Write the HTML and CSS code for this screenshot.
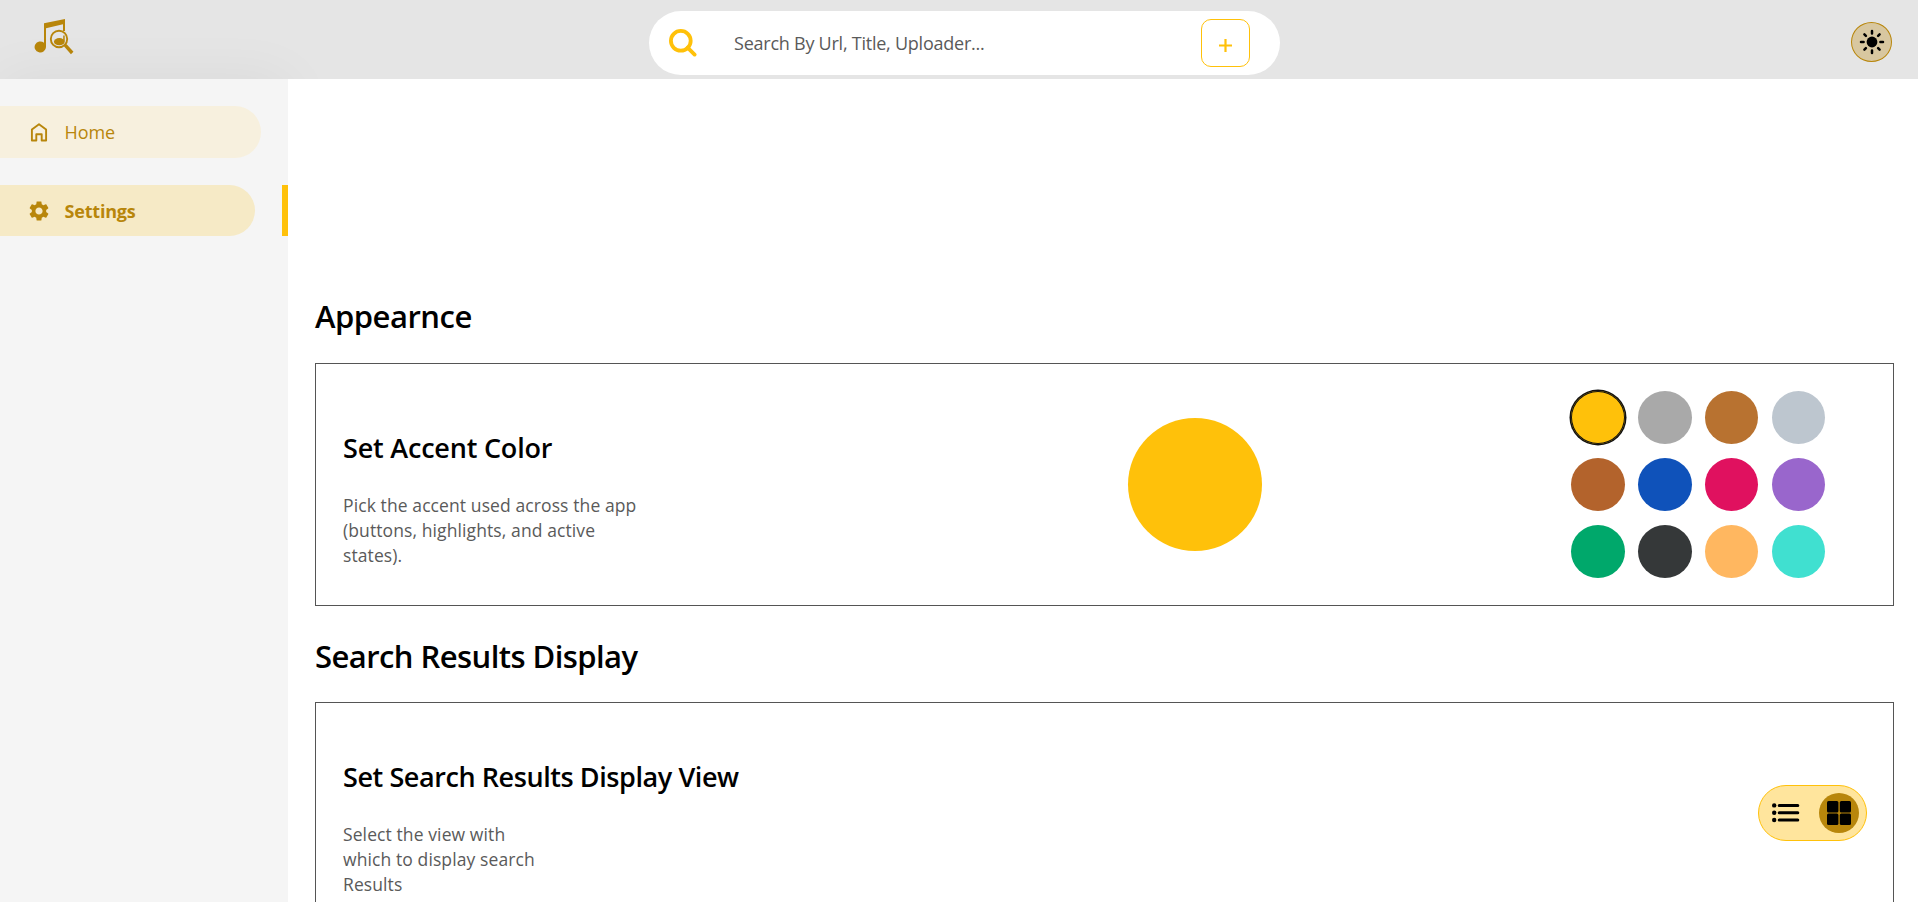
FILE: index.html
```html
<!DOCTYPE html>
<html lang="en">
<head>
<meta charset="utf-8">
<title>Settings</title>
<link rel="stylesheet" href="styles.css">
</head>
<body>
<div class="app">
  <header class="topbar">
    <svg class="logo" viewBox="0 0 40 38" width="40" height="38" fill="#b8860b">
      <path d="M10 4.2 31 0v12h-2V5.2L12 9.2v18.8a5.7 5.5 0 1 1-2-4.2z"/>
      <circle cx="25" cy="20" r="8.2" fill="none" stroke="#b8860b" stroke-width="1.9"/>
      <ellipse cx="25.3" cy="22.7" rx="5.4" ry="3.6"/>
      <path d="M29.2 16.6h1.5v6h-1.5z"/>
      <path d="m31.2 26.2 7 7.8" stroke="#b8860b" stroke-width="3.4"/>
    </svg>
    <div class="search">
      <svg class="search-icon" viewBox="0 0 28 28" width="28" height="28" fill="none" stroke="#ffc10a" stroke-width="3.8"><circle cx="11.8" cy="11.8" r="9.9"/><path d="m18.6 18.6 7 7" stroke-linecap="round"/></svg>
      <span class="placeholder">Search By Url, Title, Uploader...</span>
      <button class="add" aria-label="Add"><svg viewBox="0 0 13 13" width="13" height="13" stroke="#ffc10a" stroke-width="2.2"><path d="M6.5 0v13M0 6.5h13"/></svg></button>
    </div>
    <button class="theme" aria-label="Theme">
      <svg viewBox="0 0 26 26" width="26" height="26" stroke="#000" stroke-width="2.5" stroke-linecap="round"><circle cx="13" cy="13" r="5.4" stroke="none"/><path d="M13 2v2.4M13 21.6V24M2 13h2.6M21.4 13H24M5.4 5.4l1.5 1.5M19.1 19.1l1.5 1.5M5.4 20.6l1.5-1.5M19.1 6.9l1.5-1.5"/></svg>
    </button>
  </header>
  <div class="body">
    <nav class="sidebar">
      <div class="nav-row">
        <a class="nav-item home">
          <svg viewBox="0 0 18 19" width="18" height="19" fill="none" stroke="#b8860b" stroke-width="1.9" stroke-linejoin="round"><path d="M1.9 6.6 9 1.3l7.1 5.3v10.9h-4.4v-6.2H6.3v6.2H1.9z"/></svg>
          <span>Home</span>
        </a>
      </div>
      <div class="nav-row active">
        <a class="nav-item settings">
          <svg viewBox="2 2 20 20" width="20" height="20" fill="#b8860b"><path d="M19.14 12.94c.04-.3.06-.61.06-.94 0-.32-.02-.64-.07-.94l2.03-1.58c.18-.14.23-.41.12-.61l-1.92-3.32c-.12-.22-.37-.29-.59-.22l-2.39.96c-.5-.38-1.03-.7-1.62-.94l-.36-2.54c-.04-.24-.24-.41-.48-.41h-3.84c-.24 0-.43.17-.47.41l-.36 2.54c-.59.24-1.13.57-1.62.94l-2.39-.96c-.22-.08-.47 0-.59.22L2.74 8.87c-.12.21-.08.47.12.61l2.03 1.58c-.05.3-.09.63-.09.94s.02.64.07.94l-2.03 1.58c-.18.14-.23.41-.12.61l1.92 3.32c.12.22.37.29.59.22l2.39-.96c.5.38 1.03.7 1.62.94l.36 2.54c.05.24.24.41.48.41h3.84c.24 0 .44-.17.47-.41l.36-2.54c.59-.24 1.13-.56 1.62-.94l2.39.96c.22.08.47 0 .59-.22l1.92-3.32c.12-.22.07-.47-.12-.61l-2.01-1.58zM12 15.6c-1.98 0-3.6-1.62-3.6-3.6s1.62-3.6 3.6-3.6 3.6 1.62 3.6 3.6-1.62 3.6-3.6 3.6z"/></svg>
          <span>Settings</span>
        </a>
      </div>
    </nav>
    <main class="content">
      <h1 class="section-title t-appearance">Appearnce</h1>
      <section class="card accent">
        <div class="card-text">
          <h2 class="card-title t-accent">Set Accent Color</h2>
          <p class="desc d-accent">Pick the accent used across the app<br>(buttons, highlights, and active<br>states).</p>
        </div>
        <div class="preview"></div>
        <div class="swatches">
          <i class="sw gold selected"></i><i class="sw grey"></i><i class="sw bronze"></i><i class="sw silver"></i>
          <i class="sw copper"></i><i class="sw blue"></i><i class="sw ruby"></i><i class="sw violet"></i>
          <i class="sw green"></i><i class="sw onyx"></i><i class="sw peach"></i><i class="sw aqua"></i>
        </div>
      </section>
      <h1 class="section-title t-results">Search Results Display</h1>
      <section class="card results">
        <div class="card-text">
          <h2 class="card-title t-view">Set Search Results Display View</h2>
          <p class="desc d-view">Select the view with<br>which to display search<br>Results</p>
        </div>
        <div class="toggle">
          <span class="opt"><svg viewBox="0 0 28 20" width="28" height="20" stroke="#000" stroke-width="3" stroke-linecap="round"><g stroke="none"><circle cx="2.2" cy="2.4" r="2.2"/><circle cx="2.2" cy="9.7" r="2.2"/><circle cx="2.2" cy="17" r="2.2"/></g><path d="M7.2 2.6h18.6M7.2 9.8h18.6M7.2 17h18.6"/></svg></span>
          <span class="opt on"><svg viewBox="0 0 24 24" width="24" height="24"><rect width="11.4" height="11.4" rx="1.5"/><rect x="12.8" width="11.2" height="11.4" rx="1.5"/><rect y="12.6" width="11.4" height="11.4" rx="1.5"/><rect x="12.8" y="12.6" width="11.2" height="11.4" rx="1.5"/></svg></span>
        </div>
      </section>
    </main>
  </div>
</div>
</body>
</html>
```

FILE: styles.css
```css
* { box-sizing: border-box; }
body {
  margin: 0;
  background: #fff;
  color: #000;
  font-family: "Segoe UI", "Open Sans", "Noto Sans", sans-serif;
}
h1, h2, p { margin: 0; }
button { padding: 0; font: inherit; }
svg { display: block; flex: none; }
.app { height: 902px; overflow: hidden; display: flex; flex-direction: column; }

.topbar {
  flex: none;
  height: 79px;
  background: #e5e5e5;
  display: flex;
  align-items: flex-start;
}
.logo { margin: 19px 0 0 34px; }
.search {
  margin: 11px 0 0 575px;
  width: 631px;
  height: 64px;
  border-radius: 32px;
  background: #fff;
  display: flex;
  align-items: center;
  padding: 0 30px 0 20px;
}
.placeholder {
  flex: 1;
  margin-left: 37px;
  font-size: 18px;
  line-height: 24px;
  color: #5a5a5a;
  white-space: nowrap;
  letter-spacing: -0.24px;
}
.add {
  width: 49px;
  height: 48px;
  border: 1px solid #ffc10a;
  border-radius: 10px;
  background: #fff;
  display: flex;
  align-items: center;
  justify-content: center;
  padding-top: 5px;
}
.theme {
  margin: 22px 0 0 571px;
  width: 41px;
  height: 40px;
  border: 1px solid #b8860b;
  border-radius: 50%;
  background: #d8c7a0;
  display: flex;
  align-items: center;
  justify-content: center;
}

.body { flex: 1; min-height: 0; display: flex; }
.sidebar {
  flex: none;
  width: 288px;
  background: #f5f5f5;
  padding-top: 27px;
  display: flex;
  flex-direction: column;
  gap: 27px;
  box-shadow: 0 0 54px rgba(0, 0, 0, 0.055);
}
.nav-row.active { border-right: 6px solid #ffc10a; }
.nav-item {
  display: flex;
  align-items: center;
  height: 52px;
  color: #b8860b;
  font-size: 18px;
  border-radius: 0 26px 26px 0;
}
.home { width: 261px; background: #f7f0de; padding-left: 30px; gap: 16.5px; letter-spacing: -0.1px; }
.settings { width: 255px; height: 51px; background: #f6eac6; padding-left: 29px; gap: 15.5px; font-weight: 700; letter-spacing: -0.2px; }

.content { flex: 1; background: #fff; padding: 215px 24px 0 27px; }
.section-title { font-size: 31px; font-weight: 600; line-height: 44px; white-space: nowrap; letter-spacing: -0.5px; }
.t-results { margin-top: 28px; letter-spacing: -0.56px; }
.card { margin-top: 25px; border: 1px solid #555; display: flex; }
.accent { height: 243px; }
.results { margin-top: 24px; height: 270px; }
.card-text { width: 785px; padding-left: 27px; }
.accent .card-text { padding-top: 65px; }
.results .card-text { padding-top: 55px; }
.card-title { font-size: 27px; font-weight: 600; line-height: 38px; white-space: nowrap; letter-spacing: -0.2px; }
.t-view { letter-spacing: -0.42px; }
.desc { margin-top: 26px; font-size: 17.5px; line-height: 25px; color: #5a5a5a; white-space: nowrap; letter-spacing: 0.1px; }

.preview { width: 134px; height: 133px; border-radius: 50%; background: #ffc10a; margin: 54px 0 0 27px; }
.swatches {
  margin: 27px 0 0 309px;
  display: grid;
  grid-template-columns: 54px 54px 53px 53px;
  grid-auto-rows: 53px;
  gap: 14px 13px;
  align-content: start;
}
.sw { border-radius: 50%; }
.sw:nth-child(4n) { margin: 0 -1px 0 1px; }
.selected { box-shadow: 0 0 0 1.5px #111, inset 0 0 0 1px #111; }
.gold { background: #ffc10a; }
.grey { background: #a9a9a9; }
.bronze { background: #b87230; }
.silver { background: #bdc6cf; }
.copper { background: #b3632c; }
.blue { background: #0f52ba; }
.ruby { background: #e0115f; }
.violet { background: #9966cc; }
.green { background: #00a86b; }
.onyx { background: #353839; }
.peach { background: #ffb760; }
.aqua { background: #40e0d0; }

.toggle {
  margin: 82px 26px 0 auto;
  width: 109px;
  height: 56px;
  border: 1px solid #ffc10a;
  border-radius: 28px;
  background: #ffe59d;
  display: flex;
  align-items: center;
  justify-content: space-between;
  padding: 0 7px;
}
.opt { width: 40px; height: 40px; border-radius: 50%; display: flex; align-items: center; justify-content: center; }
.on { background: #b8860b; }
```
